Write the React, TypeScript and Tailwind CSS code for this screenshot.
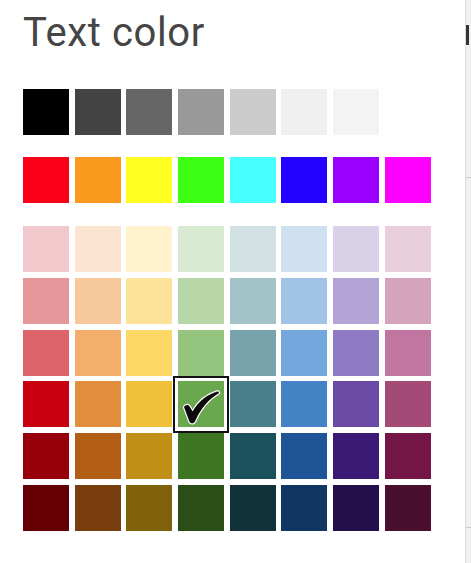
import React from 'react';

const grays = ['#000000', '#434343', '#666666', '#999999', '#cccccc', '#efefef', '#f3f3f3', '#ffffff'];
const brights = ['#fb0019', '#fb991e', '#ffff22', '#3dff14', '#48ffff', '#2300ff', '#9b00ff', '#ff00ff'];

const palette = [
    ['#f1c9cc', '#fbe5d0', '#fff2cc', '#d9ead3', '#d0e0e3', '#cfe0f1', '#d9d1e8', '#e9cfdb'],
    ['#e6979a', '#f6c89c', '#fde39a', '#b6d6a8', '#a3c2c8', '#a0c3e6', '#b3a4d6', '#d4a3bc'],
    ['#dc6369', '#f3ae6b', '#fcd766', '#95c47e', '#78a3ad', '#73a6da', '#8e7ac2', '#c076a0'],
    ['#c9000f', '#e28f3d', '#efc13a', '#6aa84f', '#4a7f8c', '#4483c4', '#6b4aa6', '#a34a77'],
    ['#97000a', '#b25e14', '#bf9015', '#3e7624', '#1b505d', '#1f5496', '#3a1a74', '#741646'],
    ['#640004', '#783d0c', '#7f600b', '#2b4d16', '#12323a', '#0f3662', '#220f4b', '#4a0e2e'],
];

// selected swatch: row 3 (dark 1), column 3 (green)
const SEL_ROW = 3;
const SEL_COL = 3;

function Check() {
    return (
        <svg viewBox="0 0 46 46" className="absolute inset-0 w-[46px] h-[46px] overflow-visible">
            <path
                d="M6 26 C7.5 23.5 10 23.3 11.6 25.4 L14.6 30.6 C20 20.5 28.5 13.5 40 10.2 L41.2 12 C30.5 18 22.5 28 17.2 40 C16 43 12.6 43 11.4 40.4 Z"
                fill="#0a0a0a"
                stroke="#ffffff"
                strokeWidth={2.4}
                strokeLinejoin="round"
                style={{ paintOrder: 'stroke' }}
            />
        </svg>
    );
}

function Swatch({ color, selected }: { color: string; selected?: boolean }) {
    return (
        <div className="relative w-[46px] h-[46px]" style={{ backgroundColor: color }}>
            {selected && (
                <>
                    <div className="absolute -inset-[5.4px] border-[2.7px] border-[#111111]" />
                    <Check />
                </>
            )}
        </div>
    );
}

export default function App() {
    return (
        <div className="flex w-[471px] h-[563px] bg-white overflow-hidden" style={{ fontFamily: 'Roboto, "Liberation Sans", sans-serif' }}>
            <div className="flex-1 pl-[23px] pt-[9px]">
                <h1 className="text-[40px] leading-[48px] tracking-[0.6px] text-[#454545] font-normal">Text color</h1>

                <div className="mt-[32px] grid grid-cols-[repeat(8,46px)] gap-x-[5.7px]">
                    {grays.map(c => <Swatch key={c} color={c} />)}
                </div>

                <div className="mt-[22.3px] grid grid-cols-[repeat(8,46px)] gap-x-[5.7px]">
                    {brights.map(c => <Swatch key={c} color={c} />)}
                </div>

                <div className="mt-[23px] grid grid-cols-[repeat(8,46px)] gap-x-[5.7px] gap-y-[5.7px]">
                    {palette.map((row, r) =>
                        row.map((c, i) => (
                            <Swatch key={`${r}-${i}`} color={c} selected={r === SEL_ROW && i === SEL_COL} />
                        ))
                    )}
                </div>
            </div>

            {/* edge of the page behind the popup */}
            <div className="w-[6px] h-full bg-[#f1f1f1] border-l border-[#dddddd] flex flex-col">
                <div className="mt-[25px] w-[3px] h-[20px] bg-[#333333]" />
                <div className="mt-[132px] h-px bg-[#cfcfcf]" />
                <div className="mt-[349px] h-px bg-[#cfcfcf]" />
            </div>
        </div>
    );
}
